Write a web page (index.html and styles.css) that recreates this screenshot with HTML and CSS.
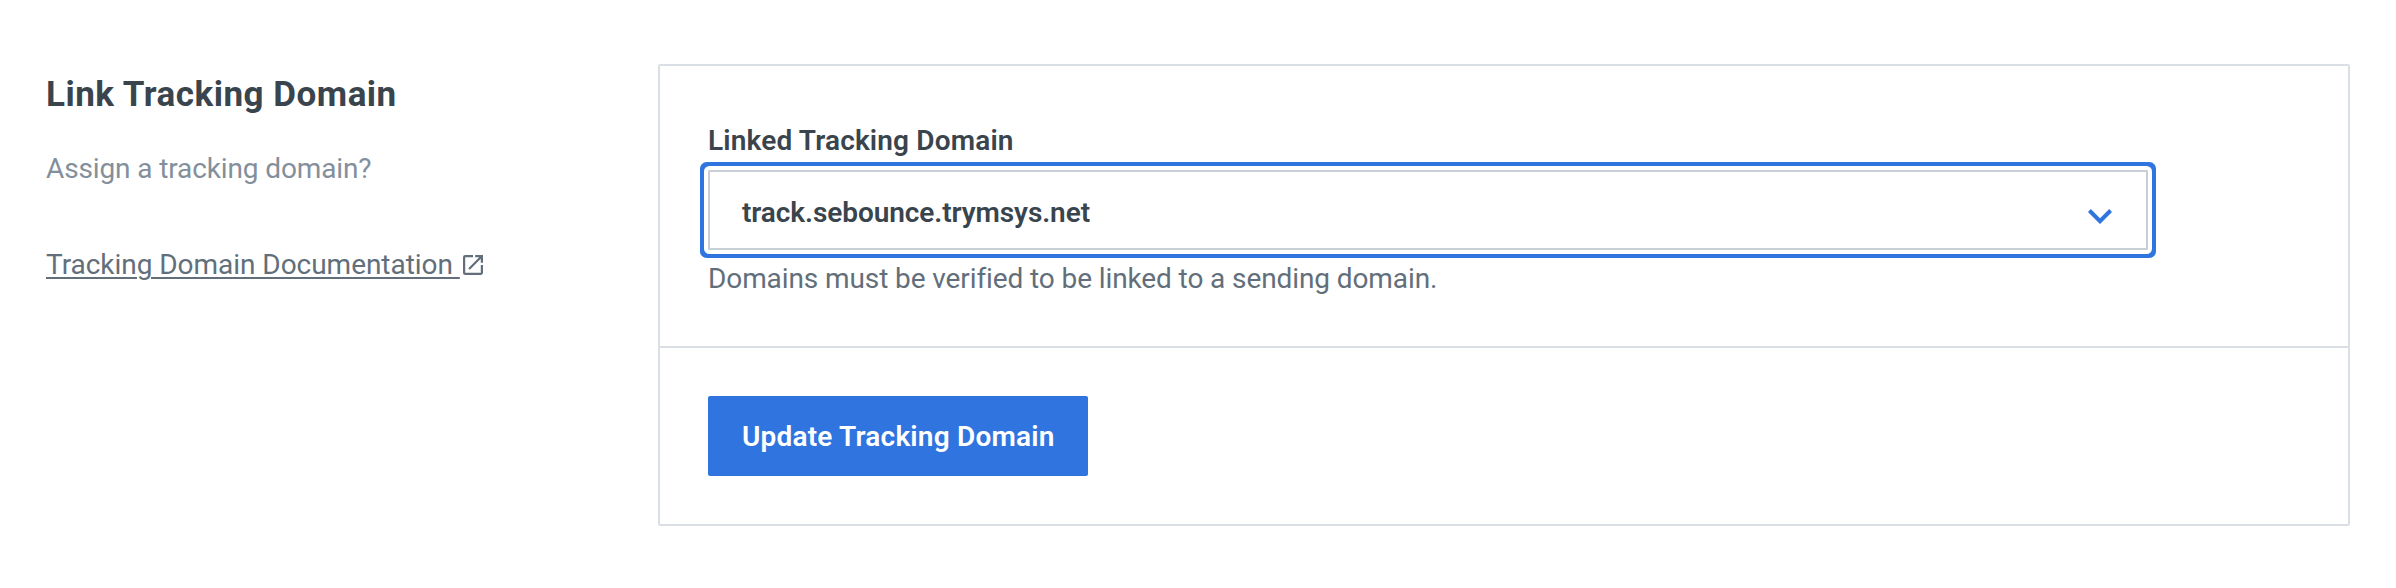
FILE: index.html
```
<!DOCTYPE html>
<html lang="en">
<head>
<meta charset="utf-8">
<title>Link Tracking Domain</title>
<link rel="stylesheet" href="styles.css">
</head>
<body>
<main class="layout">
  <aside class="intro">
    <h2 class="intro-title"><span>Link Tracking Domain</span></h2>
    <p class="intro-text"><span>Assign a tracking domain?</span></p>
    <a class="doc-link"><span class="doc-label">Tracking Domain Documentation </span><svg class="doc-icon" viewBox="3 3 18 18" fill="currentColor"><path d="M19 19H5V5h7V3H5a2 2 0 0 0-2 2v14a2 2 0 0 0 2 2h14c1.100 0 2-.9 2-2v-7h-2v7zM14 3v2h3.590l-9.830 9.830 1.410 1.410L19 6.410V10h2V3h-7z"/></svg></a>
  </aside>
  <section class="panel">
    <div class="panel-section">
      <label class="label"><span>Linked Tracking Domain</span></label>
      <div class="select">
        <span class="select-value">track.sebounce.trymsys.net</span>
        <svg class="chevron" viewBox="6 8.590 12 7.410" fill="currentColor"><path d="M7.410 8.590 12 13.170l4.590-4.580L18 10l-6 6-6-6z"/></svg>
      </div>
      <p class="help"><span>Domains must be verified to be linked to a sending domain.</span></p>
    </div>
    <div class="panel-section panel-actions">
      <button class="button"><span>Update Tracking Domain</span></button>
    </div>
  </section>
</main>
</body>
</html>
```
FILE: styles.css
```
* { box-sizing: border-box; }
body {
  margin: 0;
  background: #fff;
  color: #39444d;
  font: 400 28px/40px Roboto, sans-serif;
  white-space: nowrap;
}
h2, p { margin: 0; }
.layout {
  display: grid;
  grid-template-columns: 612px 1692px;
  padding: 64px 46px 0;
}
.intro { padding-top: 7px; }
.intro-title {
  font-size: 35px;
  line-height: 48px;
  font-weight: 700;
  letter-spacing: 0.5px;
}
.intro-text {
  margin-top: 30px;
  color: #838f9b;
  letter-spacing: -0.12px;
}
.doc-link {
  display: flex;
  align-items: center;
  margin-top: 56px;
  color: #626f7a;
  letter-spacing: -0.04px;
}
.doc-label {
  white-space: pre;
  text-decoration: underline;
  text-decoration-thickness: 2px;
  text-underline-offset: 3px;
}
.doc-icon {
  width: 20px;
  height: 20px;
  margin-left: 3px;
}
.panel {
  height: 462px;
  border: 2px solid #d9dfe5;
  border-radius: 2px;
}
.panel-section {
  height: 280px;
  padding: 55px 48px 0;
}
.panel-actions {
  height: 180px;
  padding-top: 48px;
  border-top: 2px solid #d9dfe5;
}
.label {
  display: block;
  height: 49px;
  font-weight: 600;
  letter-spacing: 0.16px;
}
.select {
  display: flex;
  align-items: center;
  justify-content: space-between;
  width: 1440px;
  height: 80px;
  padding: 5px 34px 0 32px;
  border: 2px solid #c7ced6;
  border-radius: 2px;
  box-shadow: 0 0 0 4px #fff, 0 0 0 8px #2f74df;
  font-weight: 600;
  letter-spacing: -0.08px;
}
.chevron {
  width: 24px;
  height: 15px;
  margin-top: 8px;
  color: #2f74df;
}
.help {
  margin-top: 9px;
  color: #626f7a;
  letter-spacing: -0.1px;
}
.button {
  display: block;
  width: 380px;
  height: 80px;
  padding: 2px 34px 0;
  border: 0;
  border-radius: 2px;
  background: #2f74df;
  color: #fff;
  font: inherit;
  font-weight: 600;
  letter-spacing: 0.2px;
  text-align: left;
}
```
